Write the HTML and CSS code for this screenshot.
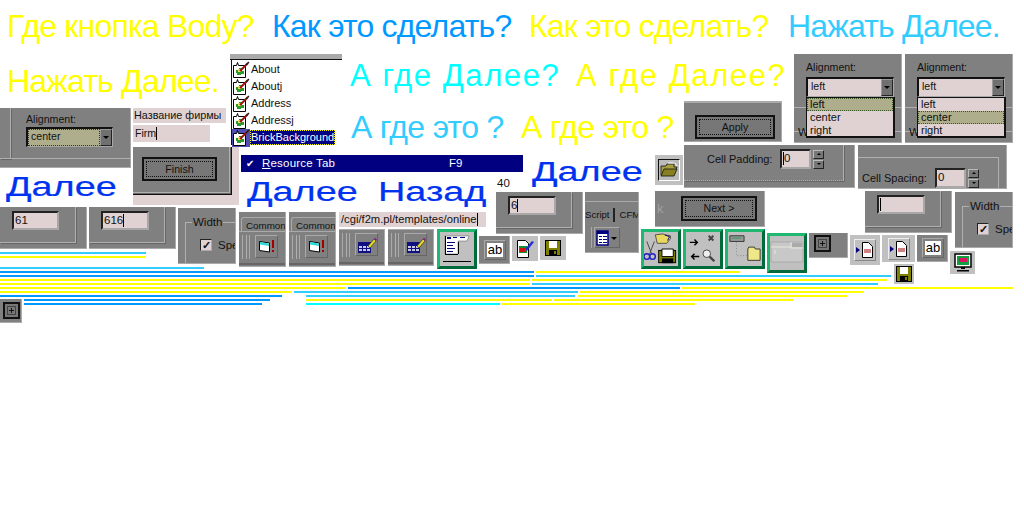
FILE: index.html
```html
<!DOCTYPE html>
<html>

<head>
    <meta charset="utf-8">
    <meta name="viewport" content="width=device-width, initial-scale=1.0">
    <link rel="stylesheet" href="styles.css">
    <title>Где кнопка Body?</title>
</head>

<body>
    <svg class="defs" width="0" height="0">
        <symbol id="i-prop" viewBox="0 0 18 18">
            <path d="M1.500 4.500h3l1-3 1 3h7v12h-12z" fill="#fff" stroke="#000" />
            <path d="M4 9h3v-2h3v3h2v3H9v1H5v-2H4z" fill="#2a9a2a" />
            <path d="M6 8h3v3H6z" fill="#e8e060" />
            <path d="M8 10l8-8" stroke="#a01010" stroke-width="2" />
            <path d="M14 4l3-3" stroke="#222" stroke-width="1.200" />
        </symbol>
        <symbol id="i-folder" viewBox="0 0 16 13">
            <path d="M.5 1.500l10 1.500v9l-10-1.500z" fill="#fff" stroke="#000" />
            <path d="M1 2l9 1.400v2.600L1 4.600z" fill="#30d8d8" />
            <path d="M13 0h2v8h-2zM13 10h2v2h-2z" fill="#a00000" />
        </symbol>
        <symbol id="i-cal" viewBox="0 0 20 18">
            <rect x="1" y="6" width="13" height="11" fill="#101080" />
            <path d="M2 10h3v2H2zM6 10h3v2H6zM10 10h3v2h-3zM2 13h3v2H2zM6 13h3v2H6zM10 13h3v2h-3z" fill="#c8c8e8" />
            <path d="M11 10l6-7 2 2-6 7z" fill="#e8d820" stroke="#222" stroke-width=".6" />
            <path d="M17 3l1-1.500 2 2-1 1.500z" fill="#902090" />
        </symbol>
        <symbol id="i-floppy" viewBox="0 0 16 16">
            <path d="M0 0h16v16H0z" fill="#000" />
            <path d="M1 1h14v14H1z" fill="#808000" />
            <path d="M4 1h8v7H4z" fill="#fff" />
            <path d="M4 10h8v5H4z" fill="#000" />
            <path d="M9 11h2v3H9z" fill="#808000" />
        </symbol>
        <symbol id="i-page" viewBox="0 0 18 18">
            <path d="M6.500 1.500h6l4 4v11h-10z" fill="#fff" stroke="#000" />
            <path d="M8 9h7M8 11h7" stroke="#a00000" />
            <path d="M0 6l4 3-4 3z" fill="#000080" />
        </symbol>
        <symbol id="i-plus" viewBox="0 0 17 17">
            <rect x="1" y="1" width="15" height="15" fill="#777" stroke="#111" stroke-width="2" />
            <rect x="4.500" y="4.500" width="8" height="8" fill="none" stroke="#111" stroke-dasharray="1 1" />
            <path d="M8.500 6v5M6 8.500h5" stroke="#111" />
        </symbol>
    </svg>

    <div class="canvas">
        <div class="big big-1 c-yellow">Где кнопка Body?</div>
        <div class="big big-2 c-blue">Как это сделать?</div>
        <div class="big big-3 c-yellow">Как это сделать?</div>
        <div class="big big-4 c-light">Нажать Далее.</div>
        <div class="big big-5 c-yellow">Нажать Далее.</div>
        <div class="big big-6 c-cyan">А где Далее?</div>
        <div class="big big-7 c-yellow">А где Далее?</div>
        <div class="big big-8 c-light">А где это ?</div>
        <div class="big big-9 c-yellow">А где это ?</div>

        <div class="wide wide-1">Далее</div>
        <div class="wide wide-2">Далее</div>
        <div class="wide wide-3">Назад</div>
        <div class="wide wide-4">Далее</div>

        <!-- Alignment, center -->
        <div class="win w-align">
            <span class="groove g-align"></span>
            <div class="lbl">Alignment:</div>
            <div class="combo combo-sel">
                <span class="combo-val">center</span>
                <span class="combo-btn"></span>
            </div>
        </div>

        <div class="pink w-firmname">Название фирмы</div>
        <div class="pink w-firm">Firm<span class="caret"></span></div>

        <div class="w-finish">
            <div class="win finish-in">
                <span class="groove g-finish"></span>
                <div class="btn btn-finish"><span>Finish</span></div>
            </div>
        </div>

        <!-- list of components -->
        <div class="w-list">
            <div class="list-top"></div>
            <div class="list-body">
                <div class="item"><svg class="ico18"><use href="#i-prop" /></svg><span>About</span></div>
                <div class="item"><svg class="ico18"><use href="#i-prop" /></svg><span>Aboutj</span></div>
                <div class="item"><svg class="ico18"><use href="#i-prop" /></svg><span>Address</span></div>
                <div class="item"><svg class="ico18"><use href="#i-prop" /></svg><span>Addressj</span></div>
                <div class="item item-sel"><svg class="ico18"><use href="#i-prop" /></svg><span>BrickBackground</span></div>
            </div>
        </div>

        <div class="w-resbar">
            <span class="check">✔</span>
            <span class="res-name"><u>R</u>esource Tab</span>
            <span class="res-key">F9</span>
        </div>

        <div class="plain w-forty">40</div>

        <!-- number fields -->
        <div class="win w-61">
            <span class="groove g-num"></span>
            <div class="field">61</div>
        </div>
        <div class="win w-616">
            <span class="groove g-num"></span>
            <div class="field">616<span class="caret"></span></div>
        </div>
        <div class="win w-6">
            <span class="groove g-num"></span>
            <div class="field">6<span class="caret"></span></div>
        </div>
        <div class="win w-empty">
            <span class="groove g-num"></span>
            <div class="field"><span class="caret"></span></div>
        </div>

        <!-- Width boxes -->
        <div class="win w-width-1">
            <div class="fieldset"><span class="legend">Width</span></div>
            <div class="spec"><span class="checkbox">✓</span><span>Spe</span></div>
        </div>
        <div class="win w-width-2">
            <div class="fieldset"><span class="legend">Width</span></div>
            <div class="spec"><span class="checkbox">✓</span><span>Spe</span></div>
        </div>

        <!-- Common tabs -->
        <div class="win w-common-1 tabbed">
            <div class="tab">Common</div>
            <div class="tool"><span class="bars"></span><span class="tool-face"><svg class="ico-folder"><use href="#i-folder" /></svg></span></div>
        </div>
        <div class="win w-common-2 tabbed">
            <div class="tab">Common</div>
            <div class="tool"><span class="bars"></span><span class="tool-face"><svg class="ico-folder"><use href="#i-folder" /></svg></span></div>
        </div>

        <div class="pink w-url">/cgi/f2m.pl/templates/online<span class="caret"></span></div>

        <div class="win w-cal-1 tool-only">
            <div class="tool"><span class="bars"></span><span class="tool-face"><svg class="ico-cal"><use href="#i-cal" /></svg></span></div>
        </div>
        <div class="win w-cal-2 tool-only">
            <div class="tool"><span class="bars"></span><span class="tool-face"><svg class="ico-cal"><use href="#i-cal" /></svg></span></div>
        </div>

        <!-- green framed toolbar buttons -->
        <div class="green g-1">
            <svg width="30" height="30" viewBox="0 0 30 30">
                <path d="M3 2h24l-2 5H16v13H3z" fill="#fff" stroke="#555" stroke-width=".5" />
                <path d="M5 3h4v2H5zM11 3h4v1h-4zM18 3h5v1h-5z" fill="#000080" />
                <path d="M5 8h8v1H5zM5 11h6v1H5zM5 14h8v1H5zM5 17h6v1H5z" fill="#000080" />
                <path d="M3 2h1v18H3zM3 20h13v1H3zM16 8h1v12h-1z" fill="#000" />
                <path d="M1 27h28v1H1z" fill="#000" />
            </svg>
        </div>
        <div class="green g-2">
            <svg width="36" height="36" viewBox="0 0 36 36">
                <path d="M12 3l8-1 2 1 6 1v3l-4 5H14z" fill="#e8d860" stroke="#333" stroke-width=".8" />
                <path d="M22 3l5 2-2 4" stroke="#000080" fill="none" />
                <path d="M3 10l5 13M11 10l-5 13" stroke="#444" fill="none" />
                <circle cx="3" cy="26" r="3" fill="none" stroke="#2020c0" stroke-width="1.500" />
                <circle cx="9" cy="26" r="3" fill="none" stroke="#2020c0" stroke-width="1.500" />
                <path d="M15 19h19v14H15z" fill="#000" />
                <path d="M16 20h17v12H16z" fill="#808000" />
                <path d="M19 18h12v8H19z" fill="#fff" stroke="#000" />
                <path d="M19 28h12v5H19z" fill="#000" />
            </svg>
        </div>
        <div class="green g-3">
            <svg width="36" height="36" viewBox="0 0 36 36">
                <path d="M4 11h8M9 8l3 3-3 3" stroke="#000" stroke-width="1.500" fill="none" />
                <path d="M14 26H6M9 23l-3 3 3 3" stroke="#000" stroke-width="1.500" fill="none" />
                <path d="M24 4l5 5M29 4l-5 5" stroke="#444" stroke-width="2" />
                <circle cx="22" cy="23" r="4" fill="#eee" stroke="#444" />
                <path d="M25 26l5 5" stroke="#444" stroke-width="2.500" />
            </svg>
        </div>
        <div class="green g-4">
            <svg width="36" height="36" viewBox="0 0 36 36">
                <path d="M2 4h15v6H2z" fill="#999" stroke="#333" />
                <path d="M4 6h10v1H4z" fill="#2a9a5a" />
                <path d="M9 11v14h12" stroke="#888" stroke-dasharray="1 2" fill="none" />
                <path d="M21 18l1-2h6l1 2h5v12H21z" fill="#f0e888" stroke="#333" />
            </svg>
        </div>
        <div class="green g-5">
            <svg width="34" height="26" viewBox="0 0 34 26">
                <path d="M1 2h32v20H1z" fill="#c8c8c8" stroke="#aaa" />
                <path d="M1 7h20M21 2v6h12M5 10v4" stroke="#e8e8d8" fill="none" />
                <path d="M22 3h10v4H22z" fill="#aaa" />
            </svg>
        </div>

        <!-- grey and silver icon buttons -->
        <div class="win w-ab-1"><span class="ab-frame"><span class="ab-in">ab</span></span></div>
        <div class="silver s-doc">
            <svg width="18" height="20" viewBox="0 0 18 20">
                <path d="M1.500 1.500h8l3 3v14h-11z" fill="#fff" stroke="#000" />
                <path d="M3 7h8v7H3z" fill="#109030" />
                <path d="M4 9h5v4H4z" fill="#d01010" />
                <path d="M9 10l7-8 2 1-7 9z" fill="#2030d0" />
            </svg>
        </div>
        <div class="silver s-floppy"><svg class="ico-floppy"><use href="#i-floppy" /></svg></div>

        <div class="silver s-folder">
            <span class="sunk">
                <svg width="18" height="16" viewBox="0 0 18 16">
                    <path d="M1 4h5l1-2h7v3h3l-3 8H1z" fill="#a8a040" stroke="#111" stroke-width=".8" />
                    <path d="M4 7h13l-3 7H1z" fill="#888020" stroke="#111" stroke-width=".8" />
                    <path d="M8 1h6M15 1l2 3" stroke="#fff" />
                </svg>
            </span>
        </div>

        <!-- Apply, cell padding, cell spacing -->
        <div class="win w-apply">
            <div class="btn btn-apply"><span>Apply</span></div>
        </div>
        <div class="win w-padding">
            <span class="groove g-padding"></span>
            <div class="cell-row">
                <span class="cell-lbl">Cell Padding:</span>
                <div class="field field-sm"><span class="caret"></span>0</div>
                <div class="spin"><span class="spin-up"></span><span class="spin-down"></span></div>
            </div>
        </div>
        <div class="win w-spacing">
            <span class="groove g-spacing"></span>
            <div class="cell-row">
                <span class="cell-lbl">Cell Spacing:</span>
                <div class="field field-sm">0</div>
                <div class="spin"><span class="spin-up"></span><span class="spin-down"></span></div>
            </div>
        </div>

        <!-- dropdowns on the right -->
        <div class="win w-drop-1 drop">
            <span class="drop-line l1"></span>
            <span class="drop-line l2"></span>
            <span class="drop-w">W</span>
            <div class="lbl">Alignment:</div>
            <div class="combo combo-pink">
                <span class="combo-val">left</span>
                <span class="combo-btn"></span>
            </div>
            <div class="droplist">
                <div class="opt opt-sel">left</div>
                <div class="opt">center</div>
                <div class="opt">right</div>
            </div>
        </div>
        <div class="win w-drop-2 drop">
            <span class="drop-line l1"></span>
            <span class="drop-line l2"></span>
            <span class="drop-w">W</span>
            <div class="lbl">Alignment:</div>
            <div class="combo combo-pink">
                <span class="combo-val">left</span>
                <span class="combo-btn"></span>
            </div>
            <div class="droplist">
                <div class="opt">left</div>
                <div class="opt opt-sel">center</div>
                <div class="opt">right</div>
            </div>
        </div>

        <div class="win w-script">
            <div class="script-tabs"><span class="stab">Script</span><span class="stab stab-off">CFM</span></div>
            <div class="script-tool">
                <span class="bars"></span>
                <span class="tool-face">
                    <svg width="22" height="16" viewBox="0 0 22 16">
                        <path d="M1 1h11v14H1z" fill="#fff" stroke="#000080" stroke-width="1.500" />
                        <path d="M1 1h11v3H1zM3 6h3v1H3zM7 6h4v1H7zM3 9h3v1H3zM7 9h4v1H7zM3 12h3v1H3zM7 12h4v1H7z" fill="#000080" />
                        <path d="M15 7h6l-3 3z" fill="#000" />
                    </svg>
                </span>
            </div>
        </div>

        <div class="win w-next">
            <span class="back-k">k</span>
            <div class="btn btn-next"><span>Next &gt;</span></div>
        </div>

        <div class="win w-plus-1"><svg class="ico-plus"><use href="#i-plus" /></svg></div>
        <div class="win w-plus-2"><svg class="ico-plus"><use href="#i-plus" /></svg></div>

        <div class="silver s-page-1"><span class="raised"><svg class="ico18"><use href="#i-page" /></svg></span></div>
        <div class="silver s-page-2"><span class="raised"><svg class="ico18"><use href="#i-page" /></svg></span></div>
        <div class="win w-ab-2"><span class="ab-frame"><span class="ab-in">ab</span></span></div>
        <div class="silver s-floppy-2"><svg class="ico-floppy"><use href="#i-floppy" /></svg></div>
        <div class="silver s-monitor">
            <svg width="18" height="19" viewBox="0 0 18 19">
                <path d="M1 1h16v13H1z" fill="#fff" stroke="#000" stroke-width="1.500" />
                <path d="M3 3h12v9H3z" fill="#10a040" />
                <path d="M5 5h8v4H5z" fill="#e01060" />
                <path d="M7 14h4v2H7zM3 17h12v1.500H3z" fill="#000" />
            </svg>
        </div>

        <!-- text stripes -->
        <div class="stripes stripes-top">
            <div class="row"><i class="bar b-light" style="width:146px"></i></div>
            <div class="row"><i class="bar b-yellow" style="width:146px"></i></div>
        </div>
        <div class="stripes stripes-main">
            <div class="row"><i class="bar b-light" style="width:204px"></i></div>
            <div class="row"><i class="bar b-blue" style="width:534px"></i><i class="bar b-yellow" style="width:204px"></i></div>
            <div class="row"><i class="bar b-blue" style="width:534px"></i><i class="bar b-light" style="width:355px"></i></div>
            <div class="row"><i class="bar b-yellow" style="width:530px"></i><i class="bar b-yellow" style="width:355px"></i></div>
            <div class="row"><i class="bar b-yellow" style="width:530px"></i><i class="bar b-light" style="width:346px"></i></div>
            <div class="row"><i class="bar b-yellow" style="width:346px"></i><i class="bar b-blue" style="width:332px"></i><i class="bar b-yellow" style="width:331px"></i></div>
            <div class="row"><i class="bar b-yellow" style="width:292px"></i><i class="bar b-light" style="width:284px"></i><i class="bar b-yellow" style="width:284px"></i></div>
            <div class="row"><i class="bar b-blue" style="width:282px"></i><i class="bar b-light" style="width:269px;margin-left:22px"></i><i class="bar b-yellow" style="width:269px;margin-left:1px"></i></div>
            <div class="row"><i class="bar b-blue" style="width:246px;margin-left:24px"></i><i class="bar b-yellow" style="width:246px;margin-left:34px"></i><i class="bar b-yellow" style="width:239px"></i></div>
            <div class="row"><i class="bar b-blue" style="width:238px;margin-left:24px"></i><i class="bar b-cyan" style="width:194px;margin-left:42px"></i><i class="bar b-yellow" style="width:193px"></i></div>
        </div>
    </div>
</body>

</html>
```

FILE: styles.css
```css
* {
    box-sizing: border-box;
}

body {
    margin: 0;
    background-color: #fff;
    font-family: "Liberation Sans", Arial, sans-serif;
    font-size: 10.600px;
    color: #111;
}

.defs {
    position: absolute;
}

.canvas {
    position: relative;
    width: 1024px;
    height: 512px;
    overflow: hidden;
}

.canvas > div {
    position: absolute;
}

/* big questions */
.big {
    font-size: 32px;
    line-height: 34px;
    letter-spacing: -.8px;
    white-space: nowrap;
}

.c-yellow { color: #ffff00; }
.c-blue { color: #0099ff; }
.c-light { color: #33ccff; }
.c-cyan { color: #00ffff; }

.big-1 { left: 7px; top: 9px; }
.big-2 { left: 272px; top: 9px; }
.big-3 { left: 529px; top: 9px; }
.big-4 { left: 788px; top: 9px; }
.big-5 { left: 7px; top: 64px; }
.big-6 { left: 350px; top: 59px; font-size: 31px; letter-spacing: 1.600px; }
.big-7 { left: 576px; top: 59px; font-size: 31px; letter-spacing: 1.600px; }
.big-8 { left: 351px; top: 110px; letter-spacing: -.7px; }
.big-9 { left: 521px; top: 110px; letter-spacing: -.7px; }

/* stretched blue words */
.wide {
    font-size: 27px;
    line-height: 30px;
    color: #0033f0;
    -webkit-text-stroke: .2px #0033f0;
    white-space: nowrap;
    transform: scaleX(1.4);
    transform-origin: left center;
}

.wide-1 { left: 6px; top: 172px; }
.wide-2 { left: 247px; top: 177px; }
.wide-3 { left: 378px; top: 177px; }
.wide-4 { left: 532px; top: 157px; }

/* grey dialog pieces */
.win {
    background-color: #808080;
    border-right: 1px solid #aaa;
    border-bottom: 1px solid #aaa;
}

.groove {
    position: absolute;
    border-right: 1px solid #b0b0b0;
    border-bottom: 1px solid #b0b0b0;
    box-shadow: 1px 1px 0 #666;
}

.lbl {
    line-height: 14px;
}

.pink {
    background-color: #e0d2d2;
    white-space: nowrap;
}

.caret {
    display: inline-block;
    width: 1px;
    height: 13px;
    background-color: #000;
    vertical-align: -3px;
}

.field {
    height: 19px;
    width: 48px;
    padding-left: 1px;
    line-height: 15px;
    font-size: 11.500px;
    background-color: #e0d2d2;
    border-top: 2px solid #222;
    border-left: 2px solid #222;
    border-right: 2px solid #a8a8a8;
    border-bottom: 2px solid #a8a8a8;
    white-space: nowrap;
}

.combo {
    display: flex;
    height: 20px;
    border-top: 2px solid #111;
    border-left: 2px solid #111;
    border-right: 1px solid #a8a8a8;
    border-bottom: 1px solid #a8a8a8;
}

.combo-val {
    flex: 1;
    padding-left: 3px;
    line-height: 15px;
    background-color: #e0d2d2;
}

.combo-sel .combo-val {
    background-color: #aeae8c;
    outline: 1px dotted #333;
    outline-offset: -1px;
}

.combo-btn {
    position: relative;
    width: 12px;
    background-color: #707070;
    border: 1px solid #222;
    border-top-color: #999;
    border-left-color: #999;
}

.combo-btn::after {
    content: "";
    position: absolute;
    left: 2px;
    top: 6px;
    border-top: 3px solid #000;
    border-left: 3px solid transparent;
    border-right: 3px solid transparent;
}

.btn {
    display: flex;
    padding: 2px;
    background-color: #777;
    border: 2px solid #111;
    text-align: center;
}

.btn span {
    flex: 1;
    line-height: 14px;
    border: 1px dotted #111;
    color: #111;
}

/* Alignment, center */
.w-align { left: 0; top: 108px; width: 131px; height: 60px; padding: 4px 0 0 26px; }
.g-align { left: 0; top: 0; width: 11px; height: 51px; border-right: 1px solid #b0b0b0; }
.g-align::after { content: ""; position: absolute; left: 11px; bottom: -1px; width: 119px; height: 1px; background-color: #b0b0b0; }
.w-align .combo { width: 87px; margin-top: 1px; }

.w-firmname { left: 133px; top: 108px; width: 93px; height: 15px; padding-left: 1px; font-size: 10.800px; line-height: 14px; }
.w-firm { left: 133px; top: 125px; width: 77px; height: 17px; padding-left: 2px; line-height: 16px; }

.w-finish { left: 133px; top: 147px; width: 106px; height: 58px; background-color: #e0d2d2; }
.finish-in { width: 99px; height: 48px; padding: 10px 0 0 9px; border-right: 1px solid #111; border-bottom: 1px solid #111; }
.g-finish { left: 0; top: 0; width: 97px; height: 46px; border-left: 0; }
.btn-finish { width: 75px; height: 24px; }

/* list */
.w-list { left: 230px; top: 54px; width: 112px; height: 91px; background-color: #fff; }
.list-top { height: 6px; background-color: #aaa; border-bottom: 1px solid #111; }
.list-body { height: 85px; padding-top: 1px; margin-left: 1px; border-left: 1px solid #111; font-size: 11px; }
.item { display: flex; align-items: center; height: 17px; }
.item span { padding: 0 1px; line-height: 15px; }
.ico18 { width: 18px; height: 18px; flex: none; }
.item-sel span { background-color: #000080; color: #fff; outline: 1px dotted #ff0; outline-offset: -1px; }
.item-sel .ico18 { background-color: #5050b0; }

.w-resbar { left: 241px; top: 155px; width: 282px; height: 17px; display: flex; align-items: center; background-color: #000080; color: #fff; font-size: 11.500px; line-height: 17px; }
.check { width: 21px; padding-left: 5px; font-size: 10px; }
.res-name { width: 187px; letter-spacing: .2px; }
.w-forty { left: 497px; top: 176px; font-size: 11.500px; line-height: 14px; }

/* number fields */
.w-61, .w-616, .w-6, .w-empty { padding: 4px 0 0 12px; width: 87px; height: 42px; }
.w-61 { left: 0; top: 207px; }
.w-616 { left: 89px; top: 207px; }
.w-6 { left: 496px; top: 192px; }
.w-empty { left: 865px; top: 191px; }
.g-num { left: 0; top: 0; width: 76px; height: 36px; }
.w-61 .field { width: 47px; }

/* Width boxes */
.w-width-1 { left: 178px; top: 208px; width: 58px; height: 56px; overflow: hidden; }
.w-width-2 { left: 955px; top: 192px; width: 58px; height: 56px; overflow: hidden; }
.fieldset { position: absolute; left: 7px; top: 14px; width: 80px; height: 60px; border-top: 1px solid #b0b0b0; border-left: 1px solid #b0b0b0; }
.legend { position: absolute; left: 6px; top: -8px; padding: 0 1px; background-color: #808080; font-size: 11.500px; line-height: 14px; }
.spec { position: absolute; left: 22px; top: 31px; display: flex; gap: 6px; font-size: 11.500px; line-height: 12px; }
.checkbox { width: 12px; height: 12px; background-color: #e0d2d2; border: 1px solid #222; border-right-color: #aaa; border-bottom-color: #aaa; font-size: 11px; line-height: 10px; font-weight: bold; text-align: center; }

/* Toolbars with bars */
.w-common-1 { left: 239px; top: 212px; width: 47px; height: 55px; }
.w-common-2 { left: 289px; top: 212px; width: 47px; height: 55px; }
.w-cal-1 { left: 339px; top: 229px; width: 46px; height: 37px; }
.w-cal-2 { left: 388px; top: 229px; width: 46px; height: 37px; }
.tab { height: 14px; margin: 5px 0 0 2px; padding: 2px 0 0 4px; line-height: 12px; font-size: 9.800px; border-top: 1px solid #aaa; border-left: 1px solid #aaa; border-radius: 3px 0 0 0; white-space: nowrap; overflow: hidden; }
.tool { display: flex; height: 34px; padding: 3px 0 0 3px; border-top: 1px solid #aaa; border-bottom: 2px solid #666; gap: 5px; }
.tool-only .tool { height: 35px; }
.bars { width: 8px; height: 24px; border-left: 1px solid #aaa; border-right: 1px solid #aaa; background: linear-gradient(90deg, #808080 3px, #b0b0b0 3px, #b0b0b0 4px, #808080 4px); }
.tool-face { display: flex; align-items: center; justify-content: center; width: 23px; height: 23px; border: 1px solid #aaa; border-right-color: #666; border-bottom-color: #666; }
.ico-folder { width: 16px; height: 13px; }
.ico-cal { width: 20px; height: 18px; }

.w-url { left: 339px; top: 212px; width: 147px; height: 15px; padding-left: 2px; line-height: 14px; font-size: 11.200px; }

/* green framed buttons */
.green {
    display: flex;
    align-items: center;
    justify-content: center;
    width: 40px;
    height: 40px;
    background-color: #c0c0c0;
    border: 3px solid #20b870;
    border-right-color: #006a3a;
    border-bottom-color: #006a3a;
}

.g-1 { left: 437px; top: 229px; }
.g-2 { left: 641px; top: 229px; }
.g-3 { left: 683px; top: 229px; }
.g-4 { left: 725px; top: 229px; }
.g-5 { left: 767px; top: 233px; }

/* silver buttons */
.silver {
    display: flex;
    align-items: center;
    justify-content: center;
    background-color: #c0c0c0;
}

.sunk {
    display: flex;
    align-items: center;
    justify-content: center;
    width: 22px;
    height: 22px;
    border: 1px solid #111;
    border-right-color: #fff;
    border-bottom-color: #fff;
    background-color: #bbb;
}

.raised {
    display: flex;
    align-items: center;
    justify-content: center;
    width: 22px;
    height: 22px;
    border: 1px solid #eee;
    border-right-color: #888;
    border-bottom-color: #888;
}

.w-ab-1 { left: 479px; top: 236px; width: 31px; height: 28px; }
.w-ab-2 { left: 917px; top: 235px; width: 31px; height: 27px; }
.w-ab-1, .w-ab-2 { display: flex; align-items: center; justify-content: flex-end; padding-right: 3px; }
.ab-frame { display: flex; padding: 2px; border: 1px solid #aaa; border-right-color: #666; border-bottom-color: #666; }
.ab-in { width: 16px; height: 14px; background-color: #fff; color: #000; font-size: 13px; line-height: 14px; text-align: center; }
.s-doc { left: 512px; top: 236px; width: 26px; height: 25px; }
.s-floppy { left: 540px; top: 236px; width: 26px; height: 24px; }
.ico-floppy { width: 16px; height: 16px; }
.s-folder { left: 655px; top: 155px; width: 28px; height: 30px; }
.s-page-1 { left: 850px; top: 235px; width: 30px; height: 30px; }
.s-page-2 { left: 882px; top: 235px; width: 33px; height: 27px; }
.s-floppy-2 { left: 894px; top: 264px; width: 20px; height: 20px; }
.s-monitor { left: 950px; top: 251px; width: 25px; height: 23px; }
.w-plus-1 { left: 809px; top: 233px; width: 39px; height: 25px; padding: 2px 0 0 5px; }
.w-plus-2 { left: 0; top: 299px; width: 22px; height: 24px; padding: 3px 0 0 3px; }
.ico-plus { width: 17px; height: 17px; display: block; }

/* Apply and cell rows */
.w-apply { left: 684px; top: 101px; width: 98px; height: 41px; padding: 12px 0 0 11px; border-top: 2px solid #aaa; }
.btn-apply { width: 80px; height: 24px; }
.w-padding { left: 684px; top: 145px; width: 171px; height: 43px; }
.w-spacing { left: 858px; top: 145px; width: 149px; height: 44px; }
.g-padding { left: 0; top: 0; width: 160px; height: 36px; border-bottom: 1px dotted #b0b0b0; }
.g-spacing { left: 0; top: 12px; width: 141px; height: 32px; border-bottom: 0; box-shadow: none; border-top: 1px solid #b0b0b0; }
.cell-row { position: relative; display: flex; align-items: center; }
.w-padding .cell-row { padding: 4px 0 0 23px; }
.w-spacing .cell-row { padding: 23px 0 0 4px; }
.cell-lbl { width: 73px; font-size: 11px; white-space: nowrap; }
.field-sm { width: 31px; height: 20px; }
.spin { display: flex; flex-direction: column; gap: 1px; margin-left: 2px; }
.spin span { position: relative; width: 11px; height: 9px; background-color: #777; border: 1px solid #222; border-top-color: #bbb; border-left-color: #bbb; }
.spin-up::after, .spin-down::after { content: ""; position: absolute; left: 3px; top: 2px; border-left: 2px solid transparent; border-right: 2px solid transparent; }
.spin-up::after { border-bottom: 2px solid #000; }
.spin-down::after { border-top: 2px solid #000; }

/* dropdowns */
.drop { width: 108px; height: 89px; padding: 6px 0 0 12px; top: 54px; }
.w-drop-1 { left: 794px; }
.w-drop-2 { left: 905px; }
.drop .combo { width: 88px; margin-top: 3px; }
.drop-line { position: absolute; left: 0; width: 100%; height: 1px; background-color: #b0b0b0; }
.drop-line.l1 { top: 53px; }
.drop-line.l2 { top: 77px; }
.drop-w { position: absolute; left: 4px; top: 71px; font-size: 11.500px; line-height: 14px; }
.droplist { position: relative; width: 89px; height: 41px; background-color: #e0d2d2; border: 1px solid #111; border-right-width: 2px; border-bottom-width: 2px; }
.opt { height: 13px; padding-left: 3px; line-height: 13px; font-size: 11px; }
.opt-sel { background-color: #aeae8c; outline: 1px dotted #3a5a20; outline-offset: -1px; }

/* Script tabs */
.w-script { left: 585px; top: 192px; width: 54px; height: 61px; overflow: hidden; }
.script-tabs { display: flex; margin-top: 9px; height: 21px; padding-top: 6px; border-top: 1px solid #aaa; white-space: nowrap; }
.stab { padding-right: 3px; line-height: 14px; font-size: 9.600px; border-right: 2px solid #222; }
.stab-off { padding: 0 0 0 5px; border-right: 0; }
.script-tool { display: flex; margin: 5px 0 0 6px; }
.script-tool .bars { width: 3px; height: 21px; border-right: 0; background: none; }
.script-tool .tool-face { width: 26px; height: 21px; }

/* Next */
.w-next { left: 655px; top: 191px; width: 110px; height: 36px; padding: 5px 0 0 26px; }
.back-k { position: absolute; left: 2px; top: 10px; color: #a0a0a0; font-size: 13px; }
.btn-next { width: 76px; height: 25px; }

/* stripes */
.stripes { left: 0; display: flex; flex-direction: column; gap: 2px; }
.stripes-top { top: 252px; }
.stripes-main { top: 267px; }
.row { display: flex; gap: 2px; height: 2px; }
.bar { display: block; height: 2px; flex: none; }
.b-yellow { background-color: #ffff00; }
.b-blue { background-color: #0099ff; }
.b-light { background-color: #33ccff; }
.b-cyan { background-color: #00ffff; }
```
